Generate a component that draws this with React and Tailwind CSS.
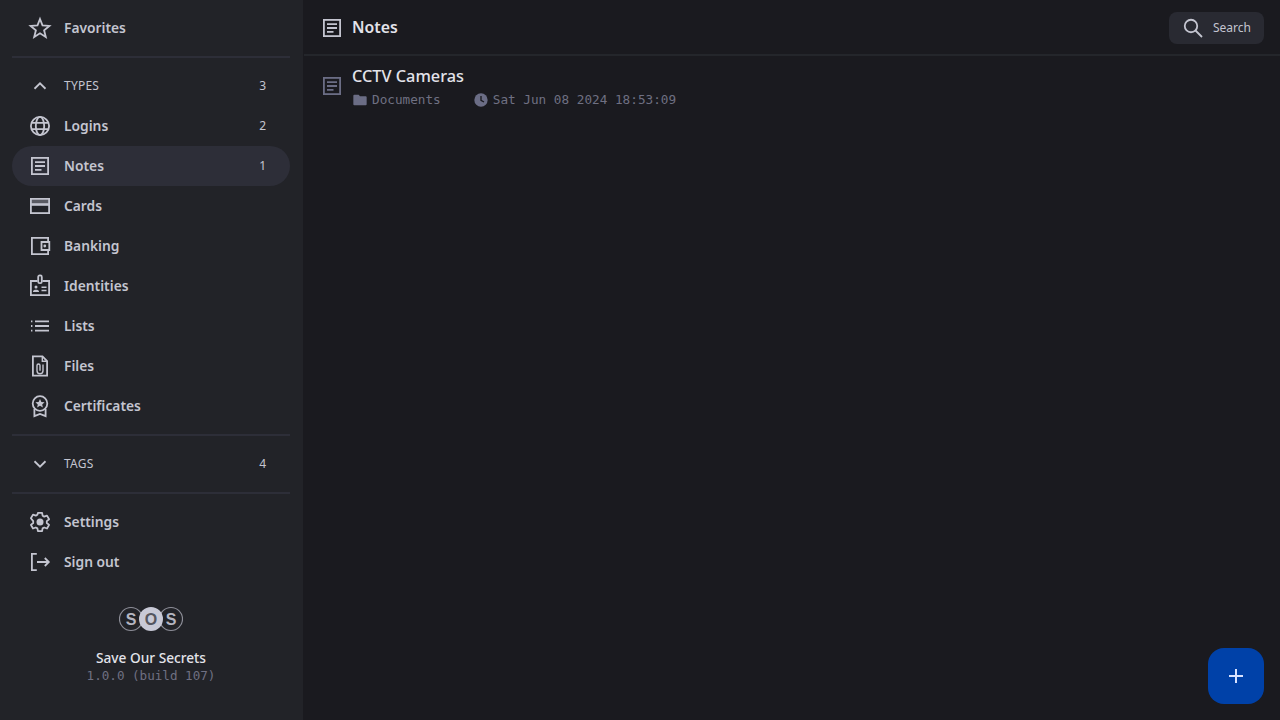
const Icon = ({ children, className = 'text-[#c4c5d0]', size = 24 }) => (
    <svg width={size} height={size} viewBox="0 0 24 24" fill="none" stroke="currentColor" strokeWidth="1.8" className={`shrink-0 ${className}`}>
        {children}
    </svg>
);

const NoteIcon = ({ className }) => (
    <Icon className={className}>
        <rect x="3.9" y="3.9" width="16.2" height="16.2" />
        <path d="M7 8.200h10M7 12h10M7 15.800h6.500" />
    </Icon>
);

const StarIcon = () => (
    <Icon>
        <path d="M12 3l2.500 6.400 6.900.5-5.300 4.400 1.700 6.700L12 17.300l-5.800 3.700 1.700-6.700-5.300-4.400 6.900-.5z" />
    </Icon>
);

const GlobeIcon = () => (
    <Icon>
        <circle cx="12" cy="12" r="9.100" />
        <ellipse cx="12" cy="12" rx="4.200" ry="9.100" />
        <path d="M3.200 8.800h17.600M3.200 15.200h17.600" />
    </Icon>
);

const CardIcon = () => (
    <Icon>
        <rect x="2.900" y="4.900" width="18.200" height="14.200" />
        <path d="M2.900 8h18.200" strokeWidth="4.500" opacity="0.35" />
        <path d="M2.900 10.500h18.200" strokeWidth="2.600" />
    </Icon>
);

const WalletIcon = () => (
    <Icon>
        <path d="M20.100 7.500V3.900H3.900v16.200h16.200V16.500" />
        <path d="M21.300 8H13.500v8h7.800z" />
        <circle cx="16.800" cy="12" r="1.400" fill="currentColor" stroke="none" />
    </Icon>
);

const BadgeIcon = () => (
    <Icon>
        <path d="M9.500 7H2.900v14.100h18.200V7H14.500" />
        <rect x="10.200" y="1.400" width="3.600" height="7.800" rx="1.500" />
        <circle cx="8" cy="13" r="1.500" fill="currentColor" stroke="none" />
        <path d="M5 18v-.6c0-1 1.400-1.700 3-1.700s3 .7 3 1.700v.6z" fill="currentColor" stroke="none" />
        <path d="M13.500 13.200h5M13.500 16.500h5" strokeWidth="1.400" />
    </Icon>
);

const ListIcon = () => (
    <Icon>
        <path d="M7 7.300h14M7 12h14M7 16.700h14" />
        <path d="M3 7.300h1.400M3 12h1.400M3 16.700h1.400" />
    </Icon>
);

const FileIcon = () => (
    <Icon>
        <path d="M14.500 2.400H4.900v19.200h14.200V7z" />
        <path d="M14.300 2.600v4.600h4.700" strokeWidth="1.400" />
        <path d="M15 10.500v6.200a3 3 0 0 1-6 0v-5.200a1.500 1.500 0 0 1 3 0v5.200" strokeWidth="1.400" />
    </Icon>
);

const AwardIcon = () => (
    <Icon>
        <circle cx="12" cy="9.500" r="7.300" />
        <path d="M12 5l1.400 3 3.200.3-2.400 2.100.7 3.100-2.900-1.700-2.900 1.700.7-3.100-2.400-2.100 3.200-.3z" fill="currentColor" stroke="none" />
        <path d="M6.400 15v7.200L12 20l5.600 2.200V15" />
    </Icon>
);

const GearIcon = () => (
    <Icon>
        <path strokeLinejoin="round" d="M9.900 2.900h4.200l.5 2.800 1.600.9 2.800-1 2.100 3.600-2.300 1.900v1.900l2.300 1.900-2.100 3.600-2.800-1-1.600.9-.5 2.800H9.900l-.5-2.800-1.600-.9-2.800 1-2.100-3.600 2.300-1.900v-1.900L2.900 8.200 5 4.600l2.800 1 1.600-.9z" />
        <circle cx="12" cy="12" r="3.500" fill="currentColor" stroke="none" />
    </Icon>
);

const LogoutIcon = () => (
    <Icon>
        <path d="M8.800 3.900H3.900v16.200h4.900" />
        <path d="M9 12h11.800M16.800 8l4 4-4 4" />
    </Icon>
);

const ChevronIcon = ({ up }) => (
    <Icon>
        <path d={up ? 'M6.500 14.750L12 9.250l5.500 5.500' : 'M6.500 9.250L12 14.750l5.500-5.500'} />
    </Icon>
);

const Row = ({ icon, label, count, active }) => (
    <div className={`flex h-10 items-center gap-3 rounded-full pl-4 pr-6 ${active ? 'bg-[#2d2e38]' : ''}`}>
        {icon}
        <span className="flex-1 text-[13.8px] font-semibold text-[#c4c5d0]">{label}</span>
        {count && <span className="text-xs text-[#c4c5d0]">{count}</span>}
    </div>
);

const SectionRow = ({ up, label, count }) => (
    <div className="flex h-10 items-center gap-3 pl-4 pr-6">
        <ChevronIcon up={up} />
        <span className="flex-1 text-xs tracking-[0.02em] text-[#c4c5d0]">{label}</span>
        <span className="text-xs text-[#c4c5d0]">{count}</span>
    </div>
);

const Divider = ({ className }) => <div className={`h-0.5 bg-[#2d2e38] ${className}`} />;

const Logo = () => (
    <svg width="64" height="26" viewBox="0 0 64 26">
        <circle cx="12" cy="13" r="11.500" fill="none" stroke="#8d8e98" strokeWidth="1.200" />
        <circle cx="52" cy="13" r="11.500" fill="none" stroke="#8d8e98" strokeWidth="1.200" />
        <circle cx="32" cy="13" r="12" fill="#c8c9d6" />
        <text x="12" y="19" textAnchor="middle" fontSize="16" fontWeight="700" fontFamily="Liberation Sans, sans-serif" fill="#b4b5c0">S</text>
        <text x="32" y="19" textAnchor="middle" fontSize="16" fontWeight="700" fontFamily="Liberation Sans, sans-serif" fill="#55565f">O</text>
        <text x="52" y="19" textAnchor="middle" fontSize="16" fontWeight="700" fontFamily="Liberation Sans, sans-serif" fill="#b4b5c0">S</text>
    </svg>
);

const App = () => {
    return (
        <div className="flex h-[720px] w-[1280px] overflow-hidden bg-[#1a1a1f] font-['Noto_Sans',sans-serif]">
            {/* Sidebar */}
            <aside className="w-[304px] shrink-0 border-r border-[#1a1a1f] bg-[#222328] px-3 pt-2">
                <div className="w-[278px]">
                    <Row icon={<StarIcon />} label="Favorites" />
                    <Divider className="mt-2 mb-2" />
                    <SectionRow up label="TYPES" count="3" />
                    <Row icon={<GlobeIcon />} label="Logins" count="2" />
                    <Row icon={<NoteIcon />} label="Notes" count="1" active />
                    <Row icon={<CardIcon />} label="Cards" />
                    <Row icon={<WalletIcon />} label="Banking" />
                    <Row icon={<BadgeIcon />} label="Identities" />
                    <Row icon={<ListIcon />} label="Lists" />
                    <Row icon={<FileIcon />} label="Files" />
                    <Row icon={<AwardIcon />} label="Certificates" />
                    <Divider className="mt-2 mb-2" />
                    <SectionRow label="TAGS" count="4" />
                    <Divider className="mt-2 mb-2" />
                    <Row icon={<GearIcon />} label="Settings" />
                    <Row icon={<LogoutIcon />} label="Sign out" />
                    <div className="mt-6 flex flex-col items-center">
                        <Logo />
                        <div className="mt-[18px] text-[13.7px] leading-4 font-medium text-[#e3e3ea]">Save Our Secrets</div>
                        <div className="mt-0.5 font-['DejaVu_Sans_Mono',monospace] text-[12.6px] leading-4 text-[#6f7082]">1.0.0 (build 107)</div>
                    </div>
                </div>
            </aside>

            {/* Main */}
            <main className="relative flex-1">
                <header className="flex h-[56px] items-center justify-between border-b-2 border-[#24262b] pt-0.5 pr-4 pl-4">
                    <div className="flex items-center gap-2">
                        <NoteIcon />
                        <h1 className="text-[15.8px] font-semibold text-[#e3e3ea]">Notes</h1>
                    </div>
                    <div className="flex h-8 w-[95px] items-center gap-2 rounded-lg bg-[#292a32] pl-3">
                        <Icon>
                            <circle cx="10" cy="10" r="6.250" />
                            <path d="M14.500 14.500L21 21" />
                        </Icon>
                        <span className="text-xs text-[#c4c5d0]">Search</span>
                    </div>
                </header>

                <div className="flex items-center gap-2 px-4 pt-2">
                    <NoteIcon className="text-[#6b6d85]" />
                    <div>
                        <div className="text-[16.3px] leading-6 font-medium text-[#e3e3ea]">CCTV Cameras</div>
                        <div className="mt-1 flex items-center font-['DejaVu_Sans_Mono',monospace] text-[12.7px] leading-4 text-[#6f7082]">
                            <svg width="16" height="16" viewBox="0 0 24 24" fill="#6b6d85" className="mr-1">
                                <path d="M2 5.500A1.500 1.500 0 0 1 3.500 4H10l2 2.500h8.500A1.500 1.500 0 0 1 22 8v10.500a1.500 1.500 0 0 1-1.500 1.500h-17A1.500 1.500 0 0 1 2 18.500z" />
                            </svg>
                            <span>Documents</span>
                            <svg width="16" height="16" viewBox="0 0 24 24" className="mr-1 ml-8">
                                <circle cx="12" cy="12" r="10" fill="#6b6d85" />
                                <path d="M12 6v6.500l4.500 2.500" fill="none" stroke="#1a1a1f" strokeWidth="2" />
                            </svg>
                            <span>Sat Jun 08 2024 18:53:09</span>
                        </div>
                    </div>
                </div>

                {/* Floating add button */}
                <button className="absolute right-4 bottom-4 flex h-14 w-14 items-center justify-center rounded-2xl bg-[#0041a8] text-[#d8e2ff]">
                    <svg width="24" height="24" viewBox="0 0 24 24" fill="none" stroke="currentColor" strokeWidth="2">
                        <path d="M12 5v14M5 12h14" />
                    </svg>
                </button>
            </main>
        </div>
    );
};

export default App;
